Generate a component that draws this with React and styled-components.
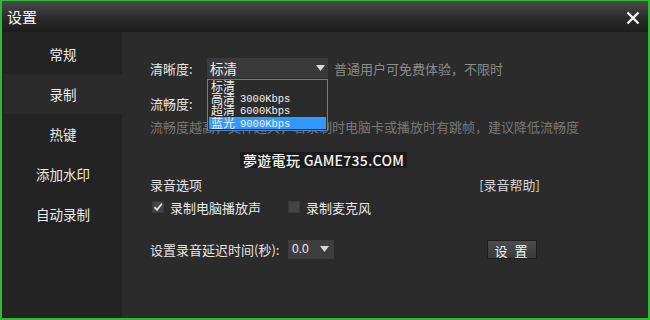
import React from 'react';
import styled, { createGlobalStyle } from 'styled-components';

const Global = createGlobalStyle`
  html, body { margin: 0; padding: 0; background: #2b2b2b; }
  * { box-sizing: border-box; }
`;

const navItems = ['常规', '录制', '热键', '添加水印', '自动录制'];
const qualities = [
  { name: '标清', rate: '' },
  { name: '高清', rate: '3000Kbps' },
  { name: '超清', rate: '6000Kbps' },
  { name: '蓝光', rate: '9000Kbps' },
];

const Arrow = () => <svg width="9" height="6" viewBox="0 0 9 6">
  <path d="M0 0 H9 L4.5 6 Z" fill="#d8d8d8"/>
</svg>

const Check = () => <svg width="10" height="10" viewBox="0 0 10 10">
  <path d="M1.5 5.2 L4 7.8 L8.8 1.8" fill="none" stroke="#eadede" strokeWidth="1.8"/>
</svg>

const App = () => <>
  <Global/>
  <Window>
    <TitleBar>
      <Title>设置</Title>
      <Close>
        <svg width="14" height="14" viewBox="0 0 14 14">
          <path d="M1.5 1.5 L12.5 12.5 M12.5 1.5 L1.5 12.5" stroke="#f2f2f2" strokeWidth="2.4"/>
        </svg>
      </Close>
    </TitleBar>
    <Body>
      <Sidebar>
        {navItems.map(n => <NavItem key={n} active={n === '录制'}>{n}</NavItem>)}
        <SideFoot/>
      </Sidebar>
      <Content>
        <Row top={26}>
          <Label>清晰度:</Label>
          <SelectWrap>
            <Select width={121}>
              <span>标清</span>
              <Arrow/>
            </Select>
            <DropList>
              {qualities.map((q, i) => <DropItem key={q.name} selected={i === 3}>
                {q.name}{q.rate && <Rate>{q.rate}</Rate>}
              </DropItem>)}
            </DropList>
          </SelectWrap>
          <Hint>普通用户可免费体验，不限时</Hint>
        </Row>
        <Row top={15}>
          <Label>流畅度:</Label>
        </Row>
        <Note>流畅度越高，文件越大，若录制时电脑卡或播放时有跳帧，建议降低流畅度</Note>
        <Watermark>夢遊電玩 GAME735.COM</Watermark>
        <Section>
          <span>录音选项</span>
          <HelpLink>[录音帮助]</HelpLink>
        </Section>
        <Checks>
          <CheckItem width={136}>
            <Box><Check/></Box>
            录制电脑播放声
          </CheckItem>
          <CheckItem>
            <Box/>
            录制麦克风
          </CheckItem>
        </Checks>
        <Row top={23}>
          <DelayLabel>设置录音延迟时间(秒):</DelayLabel>
          <Select width={46} small>
            <span>0.0</span>
            <Arrow/>
          </Select>
          <Button>设 置</Button>
        </Row>
      </Content>
    </Body>
  </Window>
</>

const Window = styled.div`
  width: 650px;
  height: 320px;
  display: flex;
  flex-direction: column;
  border: 2px solid #2dbb32;
  border-top-width: 1px;
  background: #2b2b2b;
  font-family: "Noto Sans CJK SC", "Noto Sans", sans-serif;
  color: #e2e2e2;
  font-size: 13px;
  overflow: hidden;
`;

const TitleBar = styled.div`
  height: 31px;
  flex: none;
  display: flex;
  align-items: center;
  justify-content: space-between;
  padding: 0 8px 0 5px;
  background: linear-gradient(#4a4a4a, #2a2a2a 55%, #1c1c1c);
`;

const Title = styled.span`
  font-size: 15px;
  color: #f4f4f4;
`;

const Close = styled.span`
  display: flex;
  margin-top: 3px;
`;

const Body = styled.div`
  flex: 1;
  display: flex;
  min-height: 0;
`;

const Sidebar = styled.div`
  width: 120px;
  flex: none;
  display: flex;
  flex-direction: column;
  padding-top: 2px;
  padding-left: 2px;
  background: #232323;
`;

const NavItem = styled.div`
  height: 40px;
  display: flex;
  align-items: center;
  justify-content: center;
  font-size: 13.5px;
  color: #ececec;
  background: ${p => p.active ? '#2b2b2b' : 'transparent'};
`;

const SideFoot = styled.div`
  flex: 1;
`;

const Content = styled.div`
  flex: 1;
  position: relative;
  padding-left: 28px;
  padding-right: 30px;
`;

const Row = styled.div`
  display: flex;
  align-items: center;
  height: 20px;
  margin-top: ${p => p.top}px;
`;

const Label = styled.span`
  width: 57px;
  color: #e6e6e6;
`;

const SelectWrap = styled.div`
  position: relative;
`;

const Select = styled.div`
  width: ${p => p.width}px;
  height: ${p => p.small ? 19 : 20}px;
  display: flex;
  align-items: center;
  justify-content: space-between;
  padding: 0 ${p => p.small ? 5 : 3}px 0 ${p => p.small ? 4 : 3}px;
  background: ${p => p.small ? '#3e3e3e' : '#3a3a3a'};
  color: #f0f0f0;
  font-size: ${p => p.small ? 12 : 13.5}px;
  ${p => p.small && 'font-family: "Liberation Sans", sans-serif;'}
`;

const DropList = styled.div`
  position: absolute;
  top: 21px;
  left: 0;
  width: 121px;
  border: 1px solid #4b86c6;
  background: #2b2b2b;
  padding: 0 1px 1px;
  z-index: 2;
`;

const DropItem = styled.div`
  height: 12px;
  line-height: 12px;
  padding-left: 2px;
  font-size: 12px;
  color: #f0f0f0;
  white-space: nowrap;
  background: ${p => p.selected ? '#3399ff' : 'transparent'};
  margin-top: ${p => p.selected ? 1 : 0}px;
`;

const Rate = styled.span`
  font-family: "Liberation Mono", monospace;
  font-size: 10.5px;
  margin-left: 5px;
  vertical-align: 1px;
`;

const Hint = styled.span`
  margin-left: 6px;
  color: #8c8c8c;
`;

const Note = styled.div`
  margin-top: 5px;
  height: 18px;
  line-height: 18px;
  color: #787878;
  white-space: nowrap;
`;

const Watermark = styled.div`
  position: absolute;
  left: 118px;
  top: 120px;
  height: 16px;
  padding: 0 3px;
  display: flex;
  align-items: center;
  background: #1b1b1b;
  color: #f2f2f2;
  font-size: 14px;
  font-weight: 500;
  letter-spacing: 0.3px;
  z-index: 1;
`;

const Section = styled.div`
  margin-top: 39px;
  height: 18px;
  display: flex;
  justify-content: space-between;
  align-items: center;
  color: #e4e4e4;
`;

const HelpLink = styled.span`
  margin-right: 78px;
  color: #d6d6d6;
`;

const Checks = styled.div`
  margin-top: 5px;
  height: 18px;
  display: flex;
  align-items: center;
  padding-left: 2px;
`;

const CheckItem = styled.label`
  display: flex;
  align-items: center;
  gap: 6px;
  width: ${p => p.width ? `${p.width}px` : 'auto'};
  color: #e8e8e8;
`;

const Box = styled.span`
  width: 12px;
  height: 12px;
  display: flex;
  align-items: center;
  justify-content: center;
  background: #444;
  border: 1px solid #3a3a3a;
`;

const DelayLabel = styled.span`
  width: 138px;
  color: #e6e6e6;
`;

const Button = styled.button`
  margin-left: 153px;
  width: 50px;
  height: 19px;
  padding: 0;
  border: 1px solid #1e1e1e;
  background: linear-gradient(#4c4c4c, #3a3a3a);
  color: #f2f2f2;
  font-family: "Noto Sans CJK SC", sans-serif;
  font-size: 13px;
  letter-spacing: 2px;
`;

export default App;
